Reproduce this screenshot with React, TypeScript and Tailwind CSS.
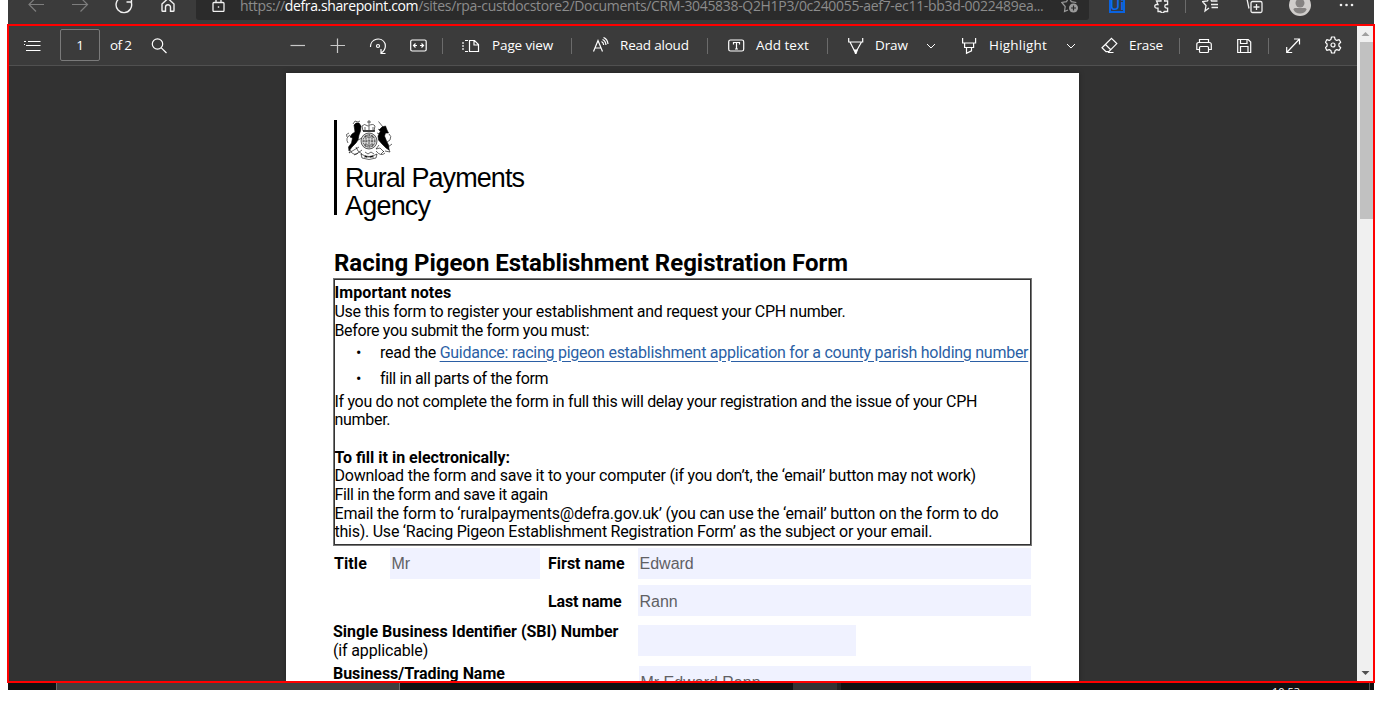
import React from 'react';

type IconProps = { className?: string; size?: number; sw?: number; children: React.ReactNode };

function Icon({ className = '', size = 18, sw = 1.2, children }: IconProps) {
  return (
    <svg
      width={size}
      height={size}
      viewBox={`0 0 ${size} ${size}`}
      fill="none"
      stroke="currentColor"
      strokeWidth={sw}
      className={`block shrink-0 ${className}`}
    >
      {children}
    </svg>
  );
}

function Cell({ className = '', children }: { className?: string; children?: React.ReactNode }) {
  return <div className={`flex h-full shrink-0 items-center whitespace-nowrap ${className}`}>{children}</div>;
}

function Separator({ className }: { className: string }) {
  return (
    <Cell className={className}>
      <div className="h-4 w-px bg-[#6b6b6b]" />
    </Cell>
  );
}

function Chevron() {
  return (
    <Icon size={10} sw={1}>
      <path d="M1 3l4 4 4-4" />
    </Icon>
  );
}

function BrowserBar() {
  return (
    <div className="ml-2 h-6 w-[1366px] overflow-hidden bg-[#3b3b3b]">
      <div className="-mt-2.5 flex h-[30px] pl-5 text-[#f0f0f0]">
        <Cell className="w-11 text-[#7d7d7d]">
          <Icon><path d="M16 8.500H1M8 1.500l-7 7 7 7" /></Icon>
        </Cell>
        <Cell className="w-[43px] text-[#7d7d7d]">
          <Icon><path d="M0 8.500h15.500M8.500 1.500l7 7-7 7" /></Icon>
        </Cell>
        <Cell className="w-[45px]">
          <Icon sw={1.4}><path d="M16.300 6.500A7.800 7.800 0 1 1 12 1.700M16.500 1v5h-5" /></Icon>
        </Cell>
        <Cell className="w-9">
          <Icon size={16} sw={1.4}>
            <path d="M2 7L8 1.500 14 7v6.500a.8.8 0 0 1-.8.800H10.500v-4a2.500 2.500 0 0 0-5 0v4H2.800A.8.8 0 0 1 2 13.500z" />
          </Icon>
        </Cell>
        <div className="flex w-[893px] shrink-0 rounded-b-[3px] bg-[#2b2b2b] pl-4">
          <Cell className="w-7">
            <Icon size={13} sw={1.3}>
              <rect x="1" y="3.500" width="11" height="9" rx="1" />
              <path d="M4 3V0h5v3" />
              <rect x="5.800" y="7.300" width="1.400" height="1.400" fill="currentColor" stroke="none" />
            </Icon>
          </Cell>
          <Cell className="w-[821px] font-['Open_Sans',sans-serif] text-[14px] tracking-[-0.32px] text-[#8c8c8c]">
            <span>
              <span className="tracking-[-0.37px]">
                https://<span className="text-white">defra.sharepoint.com</span>
              </span>
              /sites/rpa-custdocstore2/Documents/CRM-3045838-Q2H1P3/0c240055-aef7-ec11-bb3d-0022489ea...
            </span>
          </Cell>
          <Cell className="text-[#9a9a9a]">
            <Icon>
              <path d="M7 14l-3.500 1.500.7-5L.800 6.500l4.700-.8L8 1l2.300 4.700 5 .8" />
              <circle cx="12.500" cy="12" r="4.500" fill="currentColor" stroke="none" />
              <path d="M12.500 9.500v5M10 12h5" stroke="#2b2b2b" />
            </Icon>
          </Cell>
        </div>
        <Cell className="w-[65px] pl-5">
          <div className="flex h-4 w-4 items-center justify-center border-2 border-[#0a63e0] bg-[#333a45] font-['Open_Sans',sans-serif] text-[14px] font-semibold leading-none text-[#0a6cf0]">
            Ui
          </div>
        </Cell>
        <Cell className="w-[31px]">
          <Icon size={16} sw={1.3}>
            <path d="M2.500 4H7V2.500a1.800 1.800 0 0 1 3.600 0V4h3v3.500h-1a1.800 1.800 0 0 0 0 3.600h1v3.400h-3.400a1.800 1.800 0 0 1-3.500 0H4v-3.300H2.600a1.800 1.800 0 0 1 0-3.700H4z" />
          </Icon>
        </Cell>
        <Separator className="w-[17px]" />
        <Cell className="w-11">
          <Icon sw={1.3}>
            <path d="M7 12l-4 3 1-5.500L.500 5.500 5.500 5 7.500.500 9.500 5h6M9 8.500h7M9.500 11.500H16" />
          </Icon>
        </Cell>
        <Cell className="w-[43px]">
          <Icon sw={1.3}>
            <rect x="5" y="5.500" width="11" height="11" rx="1.500" />
            <path d="M10.500 8v6M7.500 11h6M3 12.500L1 3" />
          </Icon>
        </Cell>
        <Cell className="w-[50px]">
          <svg width="22" height="22" viewBox="0 0 22 22">
            <circle cx="11" cy="11" r="11" fill="#cfcdcb" />
            <circle cx="11" cy="9" r="4.500" fill="#858382" />
            <path d="M4.500 15.500q0-1.500 1.500-1.500h10q1.500 0 1.500 1.500-1.500 4-6.500 4t-6.500-4z" fill="#858382" />
          </svg>
        </Cell>
        <Cell>
          <svg width="15" height="4" viewBox="0 0 15 4" fill="#f0f0f0">
            <circle cx="2" cy="2" r="1.300" />
            <circle cx="7.500" cy="2" r="1.300" />
            <circle cx="13" cy="2" r="1.300" />
          </svg>
        </Cell>
      </div>
    </div>
  );
}

function PdfToolbar() {
  return (
    <div className="flex h-10 shrink-0 border-b border-[#505050] bg-[#3b3b3b] pl-[15px] font-['Open_Sans',sans-serif] text-[13.5px] tracking-[-0.12px] text-white">
      <Cell className="w-9">
        <Icon className="-ml-px">
          <path d="M5 4.500h12.500M5 8.500h12.500M5 13.500h12.500M1 4.500h2M3 8.500h2M3 13.500h2M1 7.500h1" />
        </Icon>
      </Cell>
      <Cell className="w-[50px]">
        <div className="-mt-px flex h-8 w-10 items-center justify-center rounded-[2px] border border-[#7a7a7a]">1</div>
      </Cell>
      <Cell className="w-[42px] tracking-[-0.6px]">of 2</Cell>
      <Cell className="w-[138px]">
        <Icon size={16} className="-ml-px"><circle cx="6.500" cy="6" r="5.200" /><path d="M10.300 9.800L15.500 15" /></Icon>
      </Cell>
      <Cell className="w-10"><Icon size={16} className="text-[#c8c8c8]"><path d="M.500 7.500H15" /></Icon></Cell>
      <Cell className="w-[39px]"><Icon size={16} className="text-[#c8c8c8]"><path d="M.500 7.500H15M7.500.500V15" /></Icon></Cell>
      <Cell className="w-[41px]">
        <Icon>
          <path d="M1.500 10A7.600 7.600 0 0 1 16 6.500q1.500 5.500-3.500 9.300M12 12v4.500h4.500" />
          <circle cx="9" cy="9" r="1.500" />
        </Icon>
      </Cell>
      <Cell className="w-8">
        <Icon>
          <rect x=".7" y="3" width="15.500" height="11" rx="1.500" />
          <path d="M3.500 8.500H7M10 8.500h3.500M5.500 6.500l-2 2 2 2M11.500 6.500l2 2-2 2" />
        </Icon>
      </Cell>
      <Separator className="w-[21px]" />
      <Cell className="w-[29px]">
        <Icon className="-ml-px">
          <path d="M7.500 3.500h5l4 4v7h-9zM12 3.500V8h4.500" />
          <path d="M6 3.500H3M6 14.500H3M1 5v2M1 8v2M1 11v2" />
        </Icon>
      </Cell>
      <Cell className="w-[79px]">Page view</Cell>
      <Separator className="w-[22px]" />
      <Cell className="w-[27px]">
        <Icon className="-ml-px">
          <path d="M1.500 14.500L6 3.500l4.500 11M3 11h6M9.500 4.500q2 1 2.200 3.500M10.500 2.500q3 1 3.500 5.500M11.500.500q4 1.500 4.500 6.500" />
        </Icon>
      </Cell>
      <Cell className="w-[87px] tracking-[-0.2px]">Read aloud</Cell>
      <Separator className="w-[21px]" />
      <Cell className="w-7">
        <Icon>
          <rect x=".7" y="3" width="15" height="11" rx="1.800" />
          <path d="M5.500 7.500V5.500h6v2M8.500 5.500v6.500M7 12h3" />
        </Icon>
      </Cell>
      <Cell className="w-[71px] tracking-normal">Add text</Cell>
      <Separator className="w-[21px]" />
      <Cell className="w-[27px]">
        <Icon>
          <path d="M.700 1v4h14V1M2 5l4.500 9h2L13.500 5" />
          <path d="M5.500 12.500h4.500L8.500 17h-1.500z" fill="currentColor" stroke="none" />
        </Icon>
      </Cell>
      <Cell className="w-[51px]">Draw</Cell>
      <Cell className="w-9"><Chevron /></Cell>
      <Cell className="w-[27px]">
        <Icon>
          <path d="M.600 1v5h13V1M2.600 6.500v4h9v-4M4.500 10.500v5.800l5-2.500v-3.300" />
        </Icon>
      </Cell>
      <Cell className="w-[77px] tracking-[0.2px]">Highlight</Cell>
      <Cell className="w-[35px]"><Chevron /></Cell>
      <Cell className="w-7">
        <Icon>
          <path d="M10.500 1.300l5.300 5.300-8 8H5L1 10.700zM4.500 7.500l5.500 5.500M7 15.500h5.500" />
        </Icon>
      </Cell>
      <Cell className="w-[50px]">Erase</Cell>
      <Separator className="w-[17px]" />
      <Cell className="w-[41px]">
        <Icon>
          <path d="M3.500 5.500V2.500h9v3M3.500 12.500H.800V7.500q0-2 2-2h10.500q2 0 2 2v5h-2.800" />
          <rect x="3.500" y="9.500" width="9" height="6" rx="1" />
        </Icon>
      </Cell>
      <Cell className="w-[31px]">
        <Icon size={16}>
          <path d="M.700 1.500h10.500l2.500 2.500v10.500H.700zM3.500 1.500v4h6.500v-4M3.500 14.500V8.500h7.500v6" />
        </Icon>
      </Cell>
      <Separator className="w-[18px]" />
      <Cell className="w-[39px]">
        <Icon size={16}><path d="M.700 14.500L13.500 1M8 1h5.500V6.500M.700 9v5.500H6.200" /></Icon>
      </Cell>
      <Cell className="w-8">
        <Icon className="-mt-px">
          <path d="M6.500 1h3l.6 2.400 1.700 1 2.400-.7 1.500 2.600-1.800 1.700v2l1.800 1.700-1.500 2.600-2.400-.7-1.700 1L9.500 17h-3l-.6-2.400-1.700-1-2.400.7L.500 11.700 2.100 10V8L.500 6.300l1.300-2.600 2.400.7 1.700-1z" strokeLinejoin="round" />
          <circle cx="8" cy="9" r="2" />
        </Icon>
      </Cell>
    </div>
  );
}

function RoyalArms() {
  return (
    <svg width="47" height="40" viewBox="0 0 47 40" fill="none" stroke="#000" strokeWidth=".6" className="block">
      <path d="M8 5l2-2 3 0 2 3-.5 5-1.500 4-1 5-2 3-4 4-3 4-.5-4 3-4 1-5-2.500-1 2-3 3-2z" fill="#000" />
      <path d="M7 4l2-3 3 1 2-1M1 17q-2-3 2-4M2 23q-3-5 2-8M3 33l5-3 5-3M5 30l-2 3M12 20l4-2M10 27l2 4 4 3" />
      <path d="M32.500 1.500l4.500 5.500" />
      <path d="M36 7l3.500-1 1.500 4 1.500 3-3 0-1 3 2 5 2 4 .5 5-3-2-4-4-3.500-4-.5-4 2.500-5-1.500-1z" fill="#000" />
      <path d="M32 9l3 2M31 13l3 1M43 14q3 2 1 6l-3 2M46 24l-4 3 2 5-5-1M33 25l-3 4 4-1 4 4M38 31l-3 3" />
      <circle cx="23" cy="21" r="8" fill="#d8d8d8" />
      <circle cx="23" cy="21" r="6" strokeDasharray="1.500 1" />
      <path d="M18 17h10M17 21h12M18 25h10M23 14v14M20 15v12M26 15v12" strokeDasharray="2 .7" />
      <path d="M17 11l-1-5q2-3 6 0 5-3 7 0l-1 5zM23 0v5M21 2h4M19 7v3M23 6v4M27 7v3" />
      <path d="M17 11h12" strokeWidth="1.300" />
      <path d="M5 32q4 4 7 1l4-3M15 34q8 5 16 0l-1 4q-7 3-14 0zM30 31q5 6 9 2M8 35l4-2M19 32l3 2 3-2 3 2M18 37h10" />
      <path d="M19 36l2 1M24 37l3-1" strokeWidth="1.300" />
    </svg>
  );
}

function Line({ className = '', children }: { className?: string; children: React.ReactNode }) {
  return <p className={`shrink-0 whitespace-nowrap ${className}`}>{children}</p>;
}

function Field({ className, children }: { className: string; children?: React.ReactNode }) {
  return (
    <div className={`flex h-[31px] shrink-0 items-center bg-[#f0f2ff] pl-[1.5px] font-['Liberation_Sans',sans-serif] text-[16px] font-normal text-[#5f6064] ${className}`}>
      {children}
    </div>
  );
}

function FormPage() {
  return (
    <div className="ml-[277px] mt-[7px] h-[608px] w-[793px] shrink-0 overflow-hidden bg-white font-['Roboto',sans-serif] text-black shadow-[0_0_5px_rgba(0,0,0,0.35)]">
      <div className="ml-12 mt-[47px] h-[95px] border-l-[3px] border-black pl-[9px] font-['Liberation_Sans',sans-serif] text-[27px] leading-7">
        <RoyalArms />
        <div className="-ml-px mt-[4px]">
          <Line className="tracking-[-0.93px]">Rural Payments</Line>
          <Line className="tracking-[-0.8px]">Agency</Line>
        </div>
      </div>
      <h1 className="ml-12 mt-[35px] h-[26px] whitespace-nowrap text-[24px] font-bold leading-[26px] tracking-[-0.03px]">
        Racing Pigeon Establishment Registration Form
      </h1>
      <div className="ml-[47px] mt-[2px] h-[268px] w-[699px] border border-[#777] pt-[3.5px] text-[16px] leading-[19px] shadow-[inset_0_0_0_1px_#333]">
        <Line className="pl-[0.5px] font-bold tracking-[0.1px]">Important notes</Line>
        <Line className="pl-[0.5px] tracking-[-0.29px]">Use this form to register your establishment and request your CPH number.</Line>
        <Line className="pl-[0.5px] tracking-[-0.36px]">Before you submit the form you must:</Line>
        <div className="mt-[3px] flex">
          <span className="w-[46px] shrink-0 pl-[22px]">•</span>
          <Line className="tracking-[-0.26px]">
            read the{' '}
            <span className="text-[#2b5fa5] underline underline-offset-[3px]">
              Guidance: racing pigeon establishment application for a county parish holding number
            </span>
          </Line>
        </div>
        <div className="mt-[7px] flex">
          <span className="w-[46px] shrink-0 pl-[22px]">•</span>
          <Line className="tracking-[-0.36px]">fill in all parts of the form</Line>
        </div>
        <Line className="mt-1 pl-[0.5px] tracking-[-0.315px]">If you do not complete the form in full this will delay your registration and the issue of your CPH</Line>
        <Line className="pl-[0.5px] leading-[18px] tracking-[-0.3px]">number.</Line>
        <Line className="mt-[19px] pl-[0.5px] font-bold">To fill it in electronically:</Line>
        <Line className="pl-[0.5px] leading-[18px] tracking-[-0.23px]">Download the form and save it to your computer (if you don’t, the ‘email’ button may not work)</Line>
        <Line className="pl-[0.5px] tracking-[-0.36px]">Fill in the form and save it again</Line>
        <Line className="pl-[0.5px] tracking-[-0.195px]">Email the form to ‘ruralpayments@defra.gov.uk’ (you can use the ‘email’ button on the form to do</Line>
        <Line className="pl-[0.5px] leading-[18px] tracking-[-0.245px]">this). Use ‘Racing Pigeon Establishment Registration Form’ as the subject or your email.</Line>
      </div>
      <div className="ml-12 mt-[2px] text-[16px] font-bold leading-[19px]">
        <div className="flex h-[37px] items-start">
          <Line className="w-14 pt-[6px] tracking-[0.1px]">Title</Line>
          <Field className="w-[150px]">Mr</Field>
          <Line className="ml-2 w-[90px] pt-[6px]">First name</Line>
          <Field className="w-[393px]">Edward</Field>
        </div>
        <div className="flex h-10 items-start pl-[214px]">
          <Line className="w-[90px] pt-[7px] tracking-[-0.15px]">Last name</Line>
          <Field className="w-[393px] pt-0.5">Rann</Field>
        </div>
        <div className="flex h-[41px] items-start">
          <div className="-ml-px -mt-[3px] w-[305px]">
            <Line>Single Business Identifier (SBI) Number</Line>
            <Line className="font-normal tracking-[-0.15px]">(if applicable)</Line>
          </div>
          <Field className="w-[218px]" />
        </div>
        <div className="flex items-start">
          <Line className="-ml-px -mt-[2px] w-[306px] tracking-[-0.05px]">Business/Trading Name</Line>
          <Field className="w-[392px] pt-0.5">Mr Edward Rann</Field>
        </div>
      </div>
    </div>
  );
}

function Scrollbar() {
  return (
    <div className="flex w-4 shrink-0 flex-col items-center bg-[#f0f0f0]">
      <svg width="16" height="16" viewBox="0 0 16 16"><path d="M4.500 10L8.500 6l4 4z" fill="#a0a0a0" /></svg>
      <div className="ml-0.5 h-[177px] w-[13px] bg-[#c1c1c1]" />
      <svg width="16" height="16" viewBox="0 0 16 16" className="mt-auto"><path d="M4.500 6l4 4 4-4z" fill="#505050" /></svg>
    </div>
  );
}

function Taskbar() {
  return (
    <div className="ml-2 flex h-[7px] w-[1366px] overflow-hidden bg-[#101010]">
      <div className="w-12" />
      <div className="w-[344px] border-x border-[#6a6a6a] bg-[#3f3f3f]" />
      <div className="ml-[393px] w-11 bg-[#333]" />
      <div className="w-1 bg-[#222]" />
      <div className="ml-[431px] w-[96px] whitespace-nowrap pt-[2px] font-['Open_Sans',sans-serif] text-[11px] leading-[14px] text-white">10:53</div>
      <div className="ml-px w-px bg-[#555]" />
    </div>
  );
}

export default function App() {
  return (
    <div className="h-[707px] w-[1382px] overflow-hidden bg-white">
      <BrowserBar />
      <div className="ml-[7px] flex h-[659px] w-[1368px] border-2 border-[#ff0000] bg-[#323232]">
        <div className="flex w-[1348px] shrink-0 flex-col overflow-hidden">
          <PdfToolbar />
          <FormPage />
        </div>
        <Scrollbar />
      </div>
      <Taskbar />
    </div>
  );
}
